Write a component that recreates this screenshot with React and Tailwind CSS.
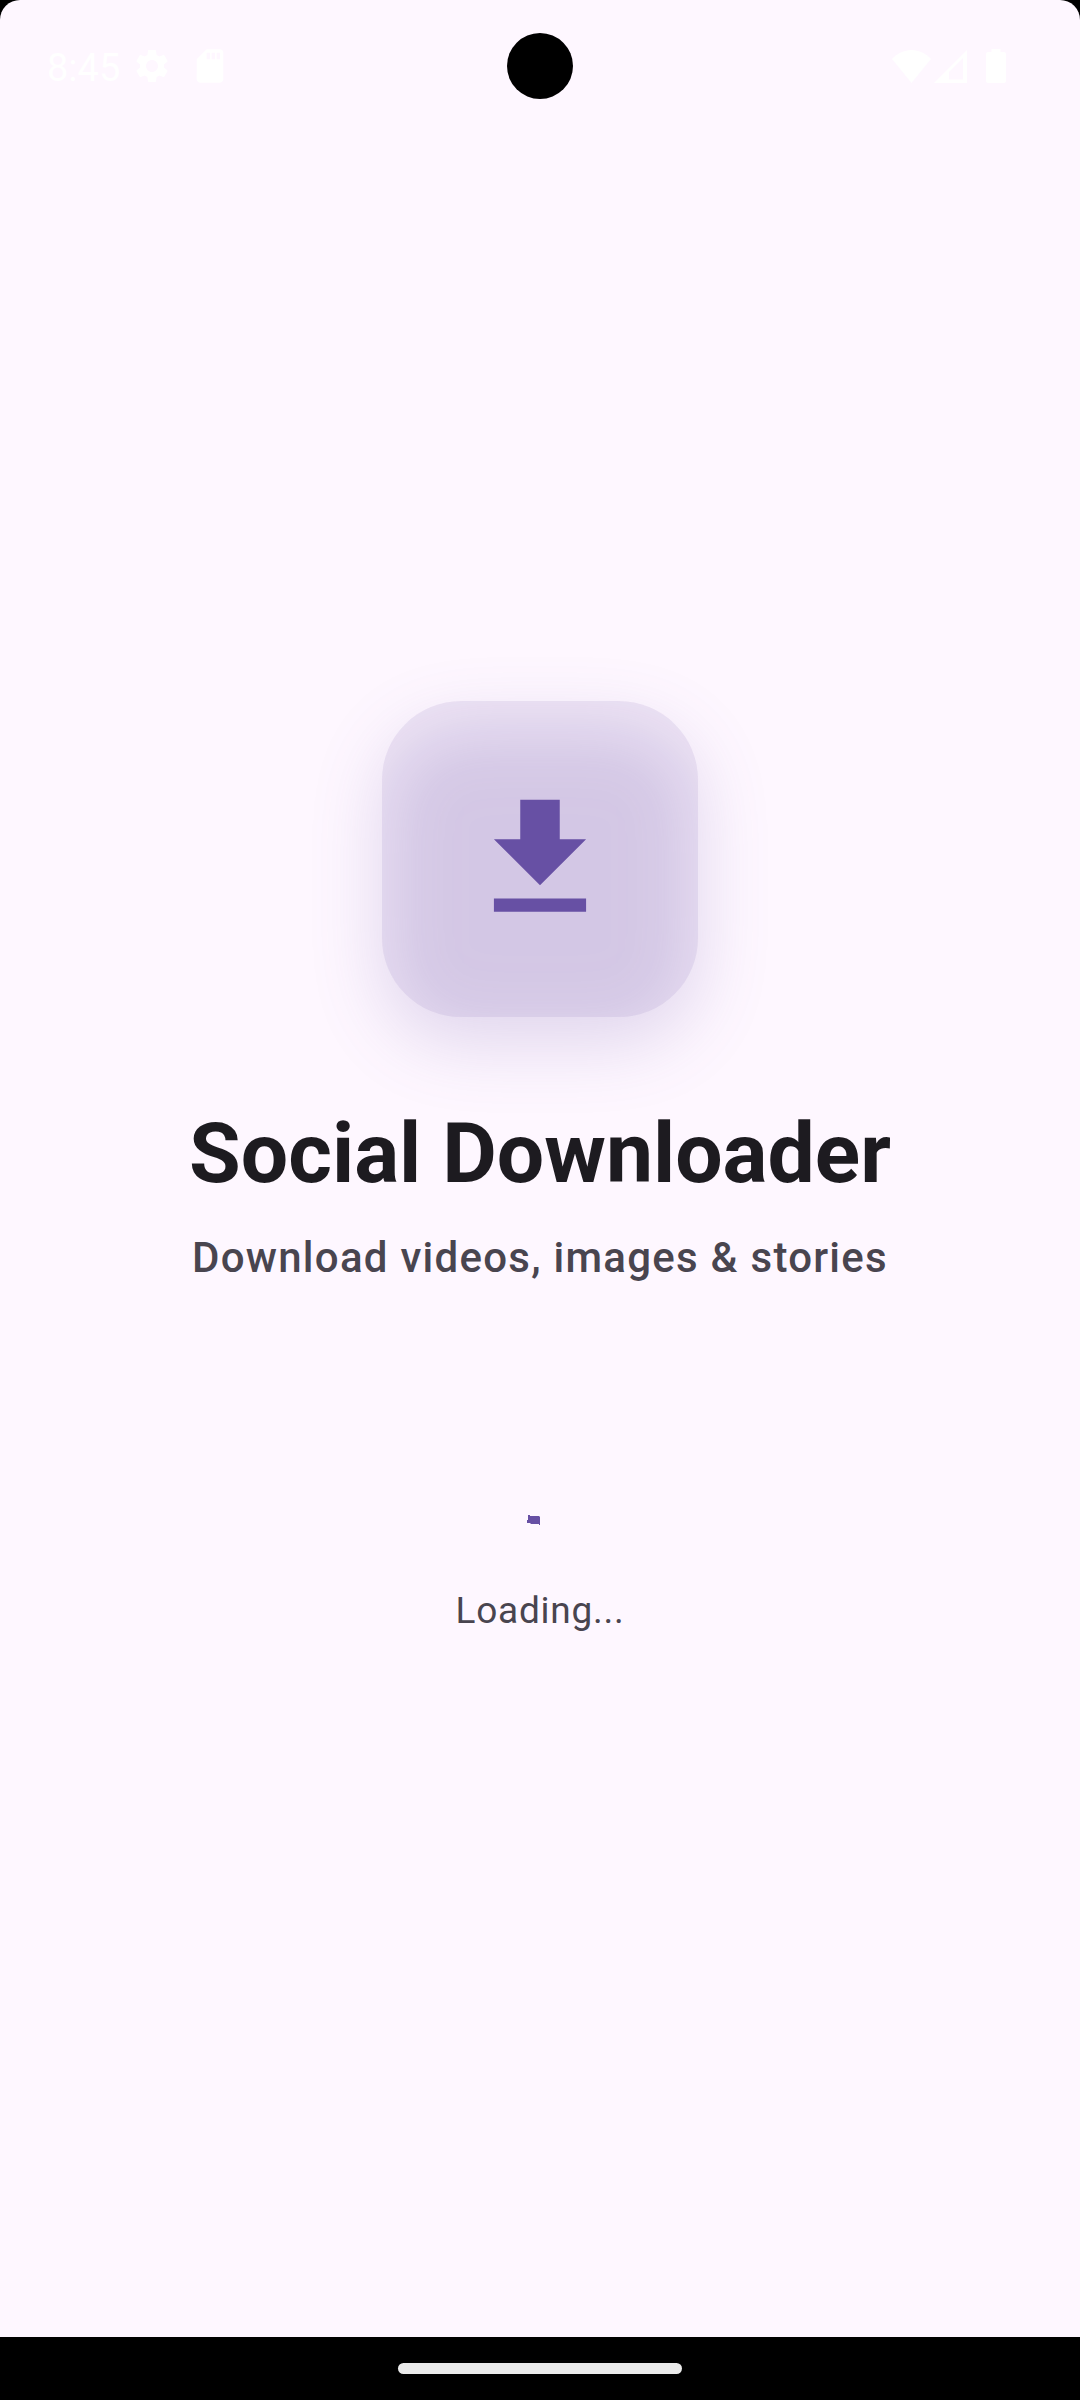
function StatusBar() {
  return (
    <header className="relative flex h-[132px] shrink-0 items-center justify-between pl-[47px] pr-[74px] text-white">
      <div className="flex items-center">
        <time className="pt-1 text-[38px] leading-[44px]">8:45</time>
        <svg className="ml-3 size-10" viewBox="0 0 24 24" fill="currentColor" aria-hidden="true">
          <path d="M19.14 12.94c.04-.3.06-.61.06-.94 0-.32-.02-.64-.07-.94l2.03-1.58c.18-.14.23-.41.12-.61l-1.92-3.32c-.12-.22-.37-.29-.59-.22l-2.39.96c-.5-.38-1.03-.7-1.62-.94l-.36-2.54c-.04-.24-.24-.41-.48-.41h-3.84c-.24 0-.43.17-.47.41l-.36 2.54c-.59.24-1.13.57-1.62.94l-2.39-.96c-.22-.08-.47 0-.59.22L2.74 8.87c-.12.21-.08.47.12.61l2.03 1.58c-.05.3-.09.63-.09.94s.02.64.07.94l-2.03 1.58c-.18.14-.23.41-.12.61l1.92 3.32c.12.22.37.29.59.22l2.39-.96c.5.38 1.03.7 1.62.94l.36 2.54c.05.24.24.41.48.41h3.84c.24 0 .44-.17.47-.41l.36-2.54c.59-.24 1.13-.56 1.62-.94l2.39.96c.22.08.47 0 .59-.22l1.92-3.32c.12-.22.07-.47-.12-.61l-2.01-1.58zM12 15.6c-1.98 0-3.6-1.62-3.6-3.6s1.62-3.6 3.6-3.6 3.6 1.62 3.6 3.6-1.62 3.6-3.6 3.6z" />
        </svg>
        <svg className="ml-[18px] size-10" viewBox="0 0 24 24" fill="currentColor" aria-hidden="true">
          <path d="M18 2h-8L4.02 8 4 20c0 1.100.9 2 2 2h12c1.100 0 2-.9 2-2V4c0-1.100-.9-2-2-2zm-6 6h-2V4h2v4zm3 0h-2V4h2v4zm3 0h-2V4h2v4z" />
        </svg>
      </div>
      <div className="flex items-center">
        <svg className="h-[33px] w-[39px]" viewBox="0 0 39 33" fill="currentColor" aria-hidden="true">
          <path d="M19.500 33 0 9C5 3.500 12 0 19.500 0S34 3.500 39 9z" />
        </svg>
        <svg className="ml-[3px] size-[33px]" viewBox="0 0 33 33" fill="currentColor" aria-hidden="true">
          <path fillRule="evenodd" d="M0 33 33 0V33zM15 29.500H29V8L15 22z" />
        </svg>
        <svg className="ml-[19px] h-[34px] w-5" viewBox="0 0 20 34" fill="currentColor" aria-hidden="true">
          <path d="M5.500 0h9v3H18a2 2 0 0 1 2 2v27a2 2 0 0 1-2 2H2a2 2 0 0 1-2-2V5a2 2 0 0 1 2-2h3.500z" />
        </svg>
      </div>
      <div className="absolute left-1/2 top-[33px] size-[66px] -translate-x-1/2 rounded-full bg-black" />
    </header>
  );
}

function AppLogo() {
  return (
    <div className="relative flex size-[316px] items-center justify-center">
      <div className="absolute inset-x-0 top-[26px] h-full rounded-[79px] bg-[#6750a4] opacity-20 blur-[36px]" />
      <div className="absolute inset-0 rounded-[79px] bg-[#6750a4]/10" />
      <svg className="relative size-[158px] text-[#6750a4]" viewBox="0 0 24 24" fill="currentColor" aria-hidden="true">
        <path d="M19 9h-4V3H9v6H5l7 7 7-7zM5 18v2h14v-2H5z" />
      </svg>
    </div>
  );
}

function Spinner() {
  return (
    <svg className="mt-[210px] size-16 text-[#6750a4]" viewBox="0 0 64 64" fill="currentColor" role="img" aria-label="Loading">
      <path d="M20 16h2v1h9l1 1v8h-1v-1h-8l-1-1h-3v-3h1z" />
    </svg>
  );
}

export default function App() {
  return (
    <div className="flex min-h-screen flex-col bg-black font-['Roboto',sans-serif]">
      <div className="flex grow flex-col rounded-t-[20px] bg-[#fef7ff]">
        <StatusBar />
        <main className="flex grow flex-col items-center justify-center pb-[132px] text-center text-[#49454f]">
          <AppLogo />
          <h1 className="mt-[84px] text-[84px] font-bold leading-[105px] text-[#1d1b20]">Social Downloader</h1>
          <p className="mt-5 text-[42px] font-medium leading-[63px] tracking-[0.03em]">Download videos, images &amp; stories</p>
          <Spinner />
          <p className="mt-[21px] text-[37px] leading-[53px] tracking-[0.02em]">Loading...</p>
        </main>
      </div>
      <footer className="flex h-[63px] shrink-0 items-center justify-center">
        <div className="h-[11px] w-[284px] rounded-full bg-[#ebebeb]" />
      </footer>
    </div>
  );
}
